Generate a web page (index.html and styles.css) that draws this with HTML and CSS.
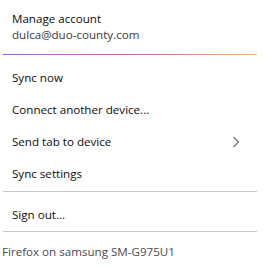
FILE: index.html
```html
<!DOCTYPE html>
<html>
<head>
<meta charset="utf-8">
<link rel="stylesheet" href="styles.css">
</head>
<body>
<div class="panel">
  <div class="account">
    <div class="title">Manage account</div>
    <div class="email">dulca@duo-county.com</div>
  </div>
  <div class="gradient"></div>
  <div class="items">
    <div class="item">Sync now</div>
    <div class="item">Connect another device...</div>
    <div class="item has-sub"><span>Send tab to device</span>
      <svg class="chev" width="8" height="12" viewBox="0 0 8 12"><path d="M1.5 1 L6.5 6 L1.5 11" fill="none" stroke="#6d6d6d" stroke-width="1.1"/></svg>
    </div>
    <div class="item">Sync settings</div>
  </div>
  <div class="sep sep-top"></div>
  <div class="item">Sign out...</div>
  <div class="sep"></div>
  <div class="footer">Firefox on samsung SM-G975U1</div>
</div>
</body>
</html>
```
FILE: styles.css
```css
html, body {
  margin: 0;
  padding: 0;
  background: #fff;
}
body {
  font-family: "Open Sans", "Noto Sans", sans-serif;
  font-size: 11.6px;
  color: #0c0c0d;
}
.panel {
  width: 265px;
  padding-top: 11px;
}
.account {
  padding: 0 12px;
}
.title {
  line-height: 16px;
  color: #0c0c0d;
}
.email {
  line-height: 16px;
  color: #38383d;
}
.gradient {
  height: 1px;
  margin: 11px 8px 0 3px;
  background: linear-gradient(to right, #9059ff, #ff4aa2 50%, #ffbd4f);
}
.items {
  margin-top: 7px;
}
.item {
  height: 32px;
  line-height: 32px;
  padding: 0 12px;
  display: flex;
  align-items: center;
  justify-content: space-between;
}
.chev {
  margin-right: 13px;
}
.sep {
  height: 1px;
  background: #c8c8c8;
  margin: 0 8px 0 3px;
}
.sep-top {
  margin-top: 1px;
  margin-bottom: 7px;
}
.footer {
  margin-top: 4px;
  padding: 0 2px;
  line-height: 32px;
  color: #4a4a4f;
}
```
